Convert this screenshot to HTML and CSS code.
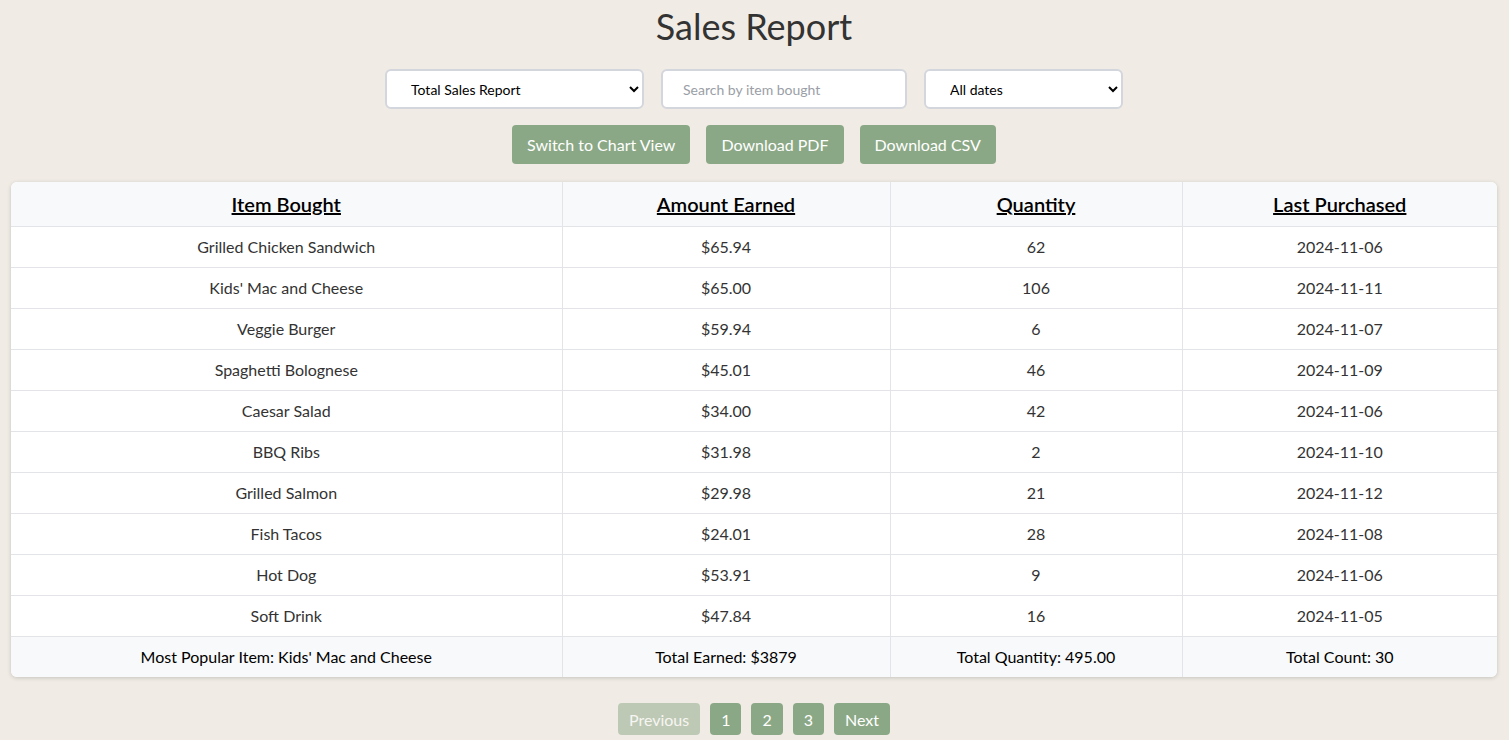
FILE: index.html
```html
<!DOCTYPE html>
<html lang="en">
<head>
<meta charset="utf-8">
<title>Sales Report</title>
<link rel="stylesheet" href="styles.css">
</head>
<body>
<main class="page">
  <h1 class="title">Sales Report</h1>
  <div class="controls">
    <select class="ctl ctl-report"><option>Total Sales Report</option></select>
    <input class="ctl ctl-search" type="text" placeholder="Search by item bought">
    <select class="ctl ctl-dates"><option>All dates</option></select>
  </div>
  <div class="actions">
    <button class="btn">Switch to Chart View</button>
    <button class="btn">Download PDF</button>
    <button class="btn">Download CSV</button>
  </div>
  <div class="table-wrap">
    <table class="report">
      <colgroup>
        <col class="c1"><col class="c2"><col class="c3"><col class="c4">
      </colgroup>
      <thead>
        <tr><th>Item Bought</th><th>Amount Earned</th><th>Quantity</th><th>Last Purchased</th></tr>
      </thead>
      <tbody>
        <tr><td>Grilled Chicken Sandwich</td><td>$65.94</td><td>62</td><td>2024-11-06</td></tr>
        <tr><td>Kids' Mac and Cheese</td><td>$65.00</td><td>106</td><td>2024-11-11</td></tr>
        <tr><td>Veggie Burger</td><td>$59.94</td><td>6</td><td>2024-11-07</td></tr>
        <tr><td>Spaghetti Bolognese</td><td>$45.01</td><td>46</td><td>2024-11-09</td></tr>
        <tr><td>Caesar Salad</td><td>$34.00</td><td>42</td><td>2024-11-06</td></tr>
        <tr><td>BBQ Ribs</td><td>$31.98</td><td>2</td><td>2024-11-10</td></tr>
        <tr><td>Grilled Salmon</td><td>$29.98</td><td>21</td><td>2024-11-12</td></tr>
        <tr><td>Fish Tacos</td><td>$24.01</td><td>28</td><td>2024-11-08</td></tr>
        <tr><td>Hot Dog</td><td>$53.91</td><td>9</td><td>2024-11-06</td></tr>
        <tr><td>Soft Drink</td><td>$47.84</td><td>16</td><td>2024-11-05</td></tr>
      </tbody>
      <tfoot>
        <tr><td>Most Popular Item: Kids' Mac and Cheese</td><td>Total Earned: $3879</td><td>Total Quantity: 495.00</td><td>Total Count: 30</td></tr>
      </tfoot>
    </table>
  </div>
  <nav class="pager">
    <button class="pbtn disabled">Previous</button>
    <button class="pbtn">1</button>
    <button class="pbtn">2</button>
    <button class="pbtn">3</button>
    <button class="pbtn">Next</button>
  </nav>
</main>
</body>
</html>
```
FILE: styles.css
```css
* { box-sizing: border-box; }
html, body { margin: 0; padding: 0; }
body {
  background: #f0ece5;
  font-family: "Segoe UI", Lato, "Open Sans", sans-serif;
  color: #333;
}
.page {
  padding: 6px 12px 0 11px;
  display: flex;
  flex-direction: column;
  align-items: stretch;
}
.title {
  margin: 0 0 23px;
  font-size: 36px;
  line-height: 40px;
  font-weight: 400;
  text-align: center;
  color: #333;
}
.controls {
  display: flex;
  justify-content: center;
  gap: 17px;
}
.ctl {
  height: 40px;
  border: 2px solid #d3d6dc;
  border-radius: 6px;
  background: #fff;
  font-family: inherit;
  font-size: 14px;
  color: #000;
  padding: 0 10px 0 20px;
}
.ctl-report { width: 259px; }
.ctl-search { width: 246px; padding-left: 20px; }
.ctl-search::placeholder { color: #9a9ea6; }
.ctl-dates { width: 199px; }
.actions {
  display: flex;
  justify-content: center;
  gap: 16px;
  margin-top: 16px;
}
.btn {
  height: 39px;
  padding: 0 15px;
  border: none;
  border-radius: 4px;
  background: #8ba886;
  color: #fff;
  font-family: inherit;
  font-size: 16px;
}
.table-wrap {
  margin-top: 18px;
  background: #fff;
  border-radius: 6px;
  box-shadow: 0 1px 4px rgba(0,0,0,0.18);
  overflow: hidden;
}
.report {
  width: 100%;
  border-collapse: collapse;
  table-layout: fixed;
}
.c1 { width: 551px; }
.c2 { width: 328px; }
.c3 { width: 292px; }
.c4 { width: auto; }
.report th, .report td {
  text-align: center;
  border-right: 1px solid #e3e4e7;
  border-bottom: 1px solid #e3e4e7;
}
.report th:last-child, .report td:last-child { border-right: none; }
.report th {
  background: #f8f9fa;
  color: #000;
  font-size: 20px;
  line-height: 24px;
  font-weight: 600;
  text-decoration: underline;
  padding: 10px 8px;
}
.report td {
  font-size: 16px;
  line-height: 20px;
  padding: 10px 8px;
  color: #333;
}
.report tfoot td {
  background: #f8f9fa;
  color: #000;
  border-bottom: none;
}
.pager {
  display: flex;
  justify-content: center;
  gap: 10px;
  margin-top: 26px;
}
.pbtn {
  height: 32px;
  padding: 0 11px;
  border: none;
  border-radius: 4px;
  background: #8ba886;
  color: #fff;
  font-family: inherit;
  font-size: 16px;
}
.pbtn.disabled { opacity: 0.5; }
```
